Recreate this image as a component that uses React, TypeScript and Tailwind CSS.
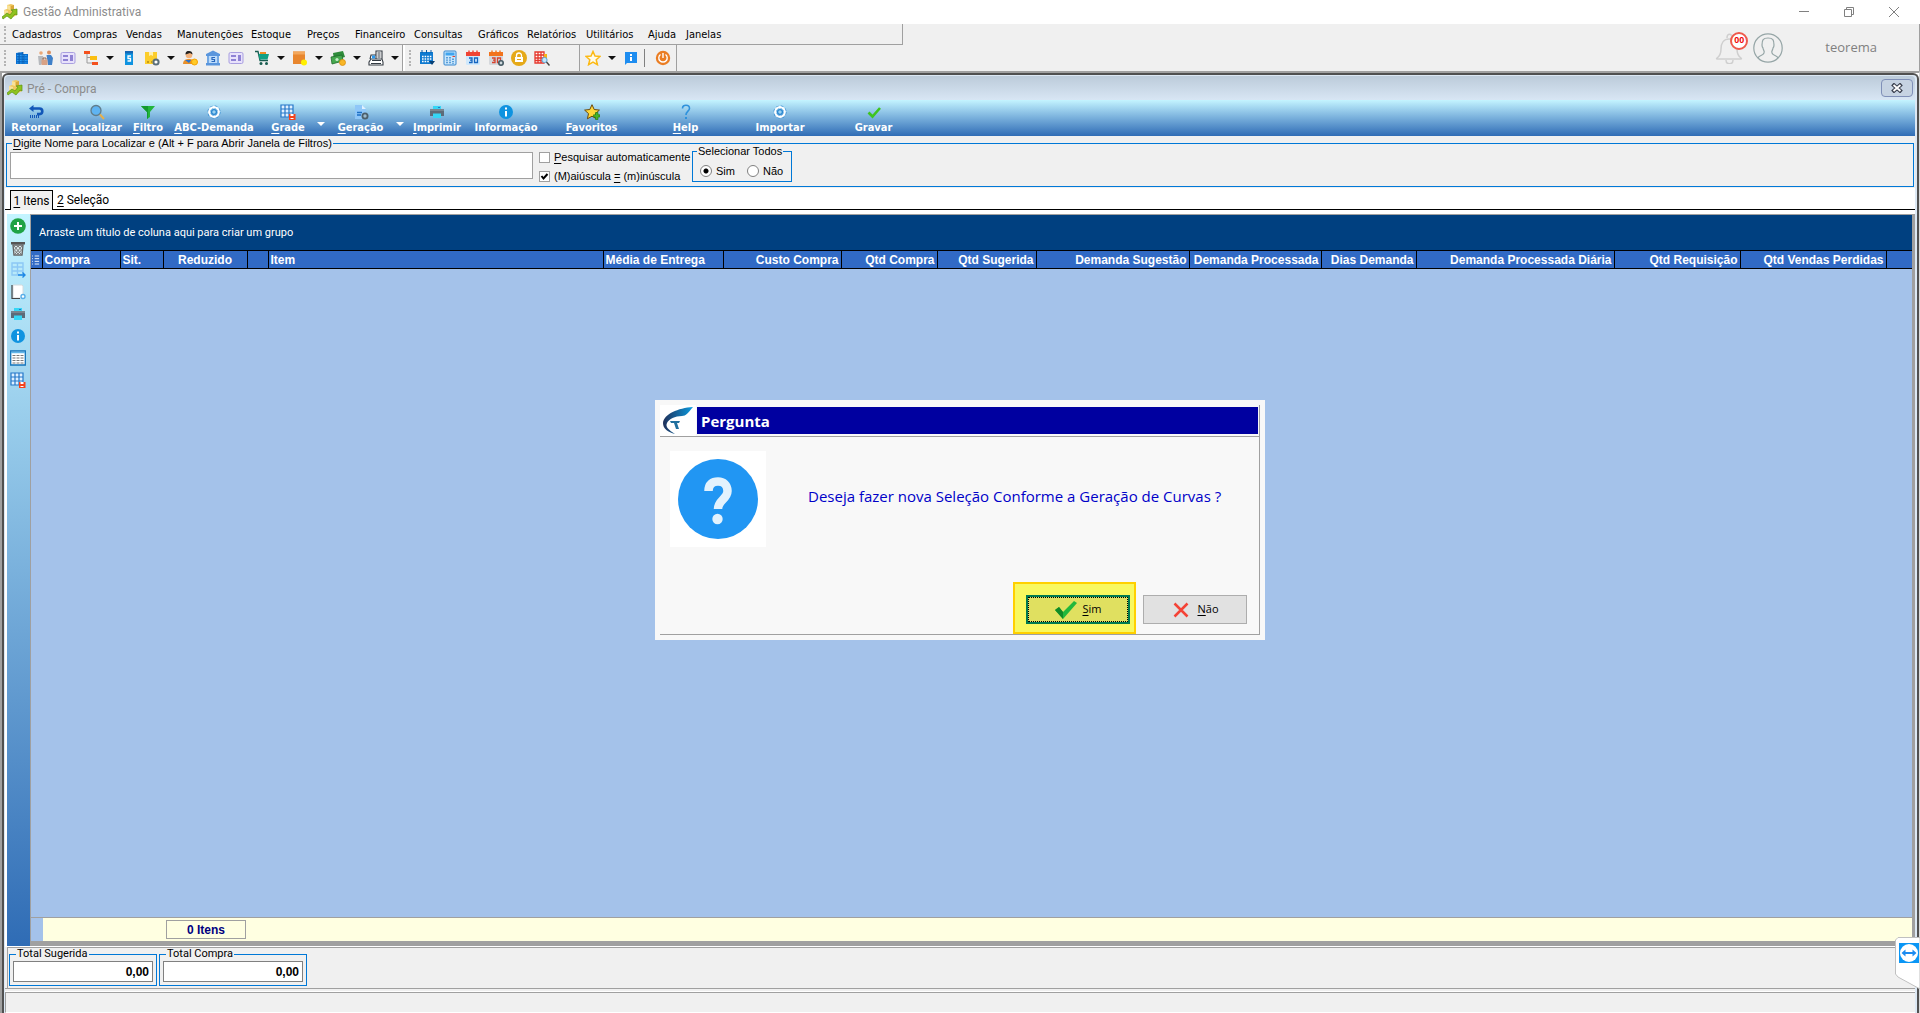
import type { ReactNode } from 'react';

interface IconProps {
  size?: string;
  children: ReactNode;
}

function Icon({ size = 'h-4 w-4', children }: IconProps) {
  return (
    <svg viewBox="0 0 16 16" className={`${size} shrink-0`} fill="none" aria-hidden="true">
      {children}
    </svg>
  );
}

const appIcon = (
  <Icon>
    <path d="M5 1l4-1 3 1v4l3 1v5l-4 2-9-3V6l3-1z" fill="#f0c860" />
    <path d="M5 1l3 1v4l-3-1zM2 6l4 1v4l-4-1z" fill="#f8e29a" />
    <path d="M9 2l3-1v4l-3 1zM11 7l4-1v4l-4 2z" fill="#d9a63a" />
    <path d="M0 13l5-4 3 2 3-4-2-1 6-1v6l-2-1-4 5-4-3-4 3z" fill="#8fc31f" stroke="#5a9410" strokeWidth=".7" />
  </Icon>
);

const gridSave = (
  <Icon>
    <path d="M1 1h12v12H1zM1 5h12M1 9h12M5 1v12M9 1v12" stroke="#2477c9" strokeWidth="1.200" fill="#dff0ff" />
    <path d="M9 10h6.500v6H9z" fill="#f4431c" />
    <path d="M10.500 10h3v2h-3zM10.500 14h3v1h-3z" fill="#fff" />
  </Icon>
);

const printer = (
  <Icon>
    <path d="M4 2h8v4H4z" fill="#35d6f5" />
    <path d="M1 5h14v7H1z" fill="#5d6b78" />
    <path d="M1 5h14v2H1z" fill="#78858f" />
    <path d="M5 2h6v2H5zM4 9.500h8V14H4z" fill="#35d6f5" />
    <path d="M9 3h2v1H9z" fill="#2477c9" />
  </Icon>
);

const info = (
  <Icon>
    <circle cx="8" cy="8" r="7" fill="#0f93e0" />
    <path d="M7 3.500h2v2H7zM7 7h2v5.500H7z" fill="#fff" />
  </Icon>
);

const gear = (
  <Icon>
    <circle cx="8" cy="8" r="5" stroke="#2a86d0" strokeWidth="3" strokeDasharray="2.200 1.730" />
    <circle cx="8" cy="8" r="4.800" stroke="#fff" strokeWidth="2.200" />
    <circle cx="8" cy="8" r="2.400" stroke="#2a86d0" strokeWidth="1.300" fill="#9bd2f2" />
  </Icon>
);

const card = (
  <Icon>
    <rect x="1" y="2.500" width="14" height="11" rx="1.500" fill="#e8e2fb" stroke="#a99fe0" />
    <path d="M3 6h5M3 10h5M10 6h3M10 8h3M10 10h3" stroke="#7263c8" strokeWidth="1.300" />
  </Icon>
);

const calendar = (top: string, body: string, ink: string, geared?: boolean) => (
  <Icon>
    <rect x="1" y="2" width="14" height="13" rx="1.500" fill={body} />
    <path d="M1 2h14v4H1z" fill={top} />
    <path d="M4 .5v3M8 .5v3M12 .5v3" stroke={top} strokeWidth="1.400" />
    <path d="M4 8h3v4.500H4M5 10.200h2M9.500 8h3v4.500h-3z" stroke={ink} strokeWidth="1.300" />
    {geared && <circle cx="13" cy="13" r="2.200" stroke="#455a64" strokeWidth="1.600" fill="#cfd8dc" />}
  </Icon>
);

const quickGroup = [
  {
    name: 'Empresas',
    icon: (
      <Icon>
        <path d="M2 3l7-1v2h5v10H2z" fill="#0b6fd0" />
        <path d="M3 5.500h10M3 8h11M3 10.500h11M3 13h11" stroke="#2b9af0" strokeDasharray="2 .6" />
        <path d="M5 2.500V14M9 2v12" stroke="#085099" strokeWidth=".7" />
      </Icon>
    ),
  },
  {
    name: 'Fornecedores',
    icon: (
      <Icon>
        <circle cx="4" cy="3" r="1.800" fill="#e9a878" />
        <circle cx="12" cy="2.500" r="2" fill="#d98f60" />
        <path d="M1 6h5l1 4-3 5H2z" fill="#b6b9bd" />
        <path d="M9.500 5H14l2 3-1 7h-4z" fill="#3f80c8" />
        <path d="M4.500 9.500h6V15h-6z" fill="#d8a184" />
        <path d="M6 9.500V8h3v1.500" stroke="#96644b" />
      </Icon>
    ),
  },
  { name: 'Cartões', icon: card },
  {
    name: 'Estrutura',
    arrow: true,
    icon: (
      <Icon>
        <path d="M4 3v10h5M4 7.500h4" stroke="#9a9a9a" />
        <path d="M1 1h6v3H1zM9 12h6v3H9z" fill="#f4511e" />
        <path d="M7 6h7v4H7z" fill="#fbbf12" />
      </Icon>
    ),
  },
  {
    name: 'Tabela de preços',
    icon: (
      <Icon>
        <path d="M4 1h8v14H4z" fill="#0f93e0" />
        <path d="M4 1h8v2.500H4z" fill="#1467b5" />
        <path d="M10 6H7v2.500h2.500V11H6.500" stroke="#fff" strokeWidth="1.300" />
      </Icon>
    ),
  },
  {
    name: 'Produtos',
    arrow: true,
    icon: (
      <Icon>
        <path d="M1 2h12v12H1z" fill="#fccd2b" />
        <path d="M5 2h4v4l-2-1-2 1z" fill="#fff0b0" />
        <path d="M3 12h2M7 12h1" stroke="#8a6b10" />
        <circle cx="12" cy="12" r="2.600" stroke="#5b6f7b" strokeWidth="2" fill="#fff" />
      </Icon>
    ),
  },
  {
    name: 'Clientes',
    icon: (
      <Icon>
        <circle cx="7" cy="5" r="3.300" fill="#f2b27c" />
        <path d="M3.500 4.500C3.500 1.500 5 1 7 1s3.500 1 3.500 3.500L8 3z" fill="#222" />
        <path d="M1 14c0-4 3-5 6-5s5 1 6 5z" fill="#e8902a" />
        <path d="M3 10h6l-2 3z" fill="#2874d0" />
        <circle cx="12.500" cy="12" r="3" fill="#ffca28" stroke="#f5a400" />
      </Icon>
    ),
  },
  {
    name: 'Bancos',
    icon: (
      <Icon>
        <path d="M1 4l7-3.500L15 4v2H1zM1 13h14v2.500H1z" fill="#5a96dd" />
        <path d="M2 6h12v7H2z" fill="#bddcfb" />
        <path d="M3 6v7M13 6v7" stroke="#5a96dd" strokeWidth="1.500" />
        <path d="M10 7.500H7v2h2.500v2H6.500" stroke="#2867bd" strokeWidth="1.200" />
      </Icon>
    ),
  },
  { name: 'Cheques', icon: card },
];

const salesGroup = [
  {
    name: 'Vendas',
    icon: (
      <Icon>
        <path d="M1 1.500h3l2 9h8" stroke="#185c50" strokeWidth="1.300" />
        <path d="M4.500 4H15l-1.500 5.500h-8z" fill="#12a185" />
        <path d="M6 2h6v2H6z" fill="#f08a24" />
        <circle cx="7" cy="13.500" r="1.500" fill="#185c50" />
        <circle cx="12.500" cy="13.500" r="1.500" fill="#185c50" />
      </Icon>
    ),
  },
  {
    name: 'Estoque',
    icon: (
      <Icon>
        <path d="M1 1.500h12v12.500H1z" fill="#e8862e" />
        <path d="M1 1.500h12v3H1z" fill="#f3a75c" />
        <circle cx="12" cy="12.500" r="3" fill="#fff000" />
      </Icon>
    ),
  },
  {
    name: 'Pagamentos',
    icon: (
      <Icon>
        <path d="M3 3l10-2 2 6-11 3z" fill="#2f8b3b" />
        <path d="M1 7l11-2 1 6-11 3z" fill="#45a84f" stroke="#1f6b2b" strokeWidth=".8" />
        <circle cx="7" cy="9.500" r="1.600" fill="#c6eec9" />
        <circle cx="12.500" cy="12.500" r="3" fill="#f8b626" stroke="#dc8f10" strokeWidth=".8" />
      </Icon>
    ),
  },
  {
    name: 'Caixa',
    icon: (
      <Icon>
        <path d="M2 9l1-4h5v4M8 9V1h6v8M1 12l2-3h11l1 3v3H1z" stroke="#333a42" strokeWidth="1.100" fill="#fff" />
        <path d="M4 5.500h3v3H4z" fill="#2b9af0" />
        <path d="M9.500 3h3M9.500 5h3M9.500 7h3M4 10.500h9M3 13.500h10" stroke="#333a42" />
      </Icon>
    ),
  },
];

const agendaGroup = [
  {
    name: 'Agenda',
    icon: (
      <Icon>
        <path d="M1 2h13v12H1z" fill="#0f7ad0" />
        <path d="M3 0v3M7.500 0v3M12 0v3" stroke="#0b5ba3" />
        <path d="M3 6.500h10M3 9h10M3 11.500h7" stroke="#fff" strokeWidth="1.300" strokeDasharray="1.600 1" />
        <path d="M10 11h6l-3 4z" fill="#073f73" />
      </Icon>
    ),
  },
  {
    name: 'Calculadora',
    icon: (
      <Icon>
        <rect x="2" y="1" width="12" height="14" rx="1" fill="#c9e6fb" stroke="#3486cf" />
        <path d="M3.500 2.500h9v3h-9z" fill="#3fa4ee" />
        <path d="M5 7v7M8 7v7M11 8.500V14" stroke="#3486cf" strokeWidth="1.500" strokeDasharray="1.400 1" />
        <path d="M10.500 6.500H13" stroke="#e4432d" />
      </Icon>
    ),
  },
  { name: 'Calendário', icon: calendar('#ef4434', '#cfe8fc', '#1565c0') },
  { name: 'Configurar calendário', icon: calendar('#f2731d', '#d5d8dc', '#d8422c', true) },
  {
    name: 'Bloquear',
    icon: (
      <Icon>
        <circle cx="8" cy="8" r="8" fill="#e5a918" />
        <path d="M4 7h8v5H4z" fill="#fff" />
        <path d="M5.500 7V5.500a2.500 2.500 0 015 0V7" stroke="#fff" strokeWidth="1.300" />
        <path d="M6 9.500h4" stroke="#e5a918" />
      </Icon>
    ),
  },
  {
    name: 'Pesquisar tabela',
    icon: (
      <Icon>
        <path d="M1 2h9v11H1zM1 5h9M1 8h9M1 10.500h9M4 2v11M7 2v11" stroke="#e5372c" strokeWidth="1.300" fill="#fff" />
        <path d="M10 4h3v4h-3z" fill="#f7b21a" />
        <circle cx="10.500" cy="10" r="2.600" fill="#c5e7fb" stroke="#5ba4d4" />
        <path d="M12.500 12l3 3.500" stroke="#444" strokeWidth="1.400" />
      </Icon>
    ),
  },
];

const menuItems = [
  { label: 'Cadastros', width: 'w-[61px]' },
  { label: 'Compras', width: 'w-[53px]' },
  { label: 'Vendas', width: 'w-[51px]' },
  { label: 'Manutenções', width: 'w-[74px]' },
  { label: 'Estoque', width: 'w-14' },
  { label: 'Preços', width: 'w-12' },
  { label: 'Financeiro', width: 'w-[59px]' },
  { label: 'Consultas', width: 'w-16' },
  { label: 'Gráficos', width: 'w-[49px]' },
  { label: 'Relatórios', width: 'w-[59px]' },
  { label: 'Utilitários', width: 'w-[62px]' },
  { label: 'Ajuda', width: 'w-[38px]' },
  { label: 'Janelas', width: 'w-[46px]' },
];

const actions = [
  {
    label: 'Retornar',
    width: 'w-[60px]',
    icon: (
      <Icon>
        <path d="M3 4.500h8.500a2.800 2.800 0 010 5.600H9" stroke="#1257b8" strokeWidth="2.600" />
        <path d="M1 4.500L5.500 1v7z" fill="#1257b8" />
        <path d="M2 12.500h9" stroke="#1257b8" strokeWidth="3" strokeDasharray="1 1" />
      </Icon>
    ),
  },
  {
    label: 'Localizar',
    hot: true,
    width: 'w-[62px]',
    icon: (
      <Icon>
        <circle cx="7" cy="6.500" r="5" fill="#5fb4f2" stroke="#607d8b" strokeWidth="1.300" />
        <path d="M11 10.500l4 4.500" stroke="#e8b04a" strokeWidth="2" />
      </Icon>
    ),
  },
  {
    label: 'Filtro',
    hot: true,
    width: 'w-10',
    icon: (
      <Icon>
        <path d="M1 2h14l-5 6v5l-3 2V8z" fill="#22b53c" />
        <path d="M1 2h7v12l-1 1V8z" fill="#129a30" />
      </Icon>
    ),
  },
  { label: 'ABC-Demanda', hot: true, width: 'w-[92px]', icon: gear },
  { label: 'Grade', hot: true, width: 'w-14', arrow: true, icon: gridSave },
  {
    label: 'Geração',
    hot: true,
    width: 'w-[69px]',
    arrow: true,
    icon: (
      <Icon>
        <path d="M2 1h7l4 4v10H2z" fill="#8fc7f8" />
        <path d="M9 1l4 4H9z" fill="#e0f1ff" />
        <path d="M4 8.500h5M4 11h4" stroke="#1c6fc4" strokeWidth="1.300" />
        <circle cx="12" cy="12" r="2.600" stroke="#4c5f6b" strokeWidth="1.800" fill="#9bb9cc" />
      </Icon>
    ),
  },
  { label: 'Imprimir', hot: true, width: 'w-16', icon: printer },
  { label: 'Informação', width: 'w-[74px]', icon: info },
  {
    label: 'Favoritos',
    hot: true,
    width: 'w-[97px]',
    icon: (
      <Icon>
        <path d="M8 .7l2.200 4.800 5.200.6-3.900 3.500 1.100 5.200L8 12.200l-4.600 2.600 1.100-5.200L.6 6.100l5.200-.6z" fill="#ffd83a" stroke="#6b4a0a" />
        <path d="M11.500 8.500h2.500v2.300h2V13h-2v2.500h-2.500V13h-2v-2.200h2z" fill="#45b52a" stroke="#23740f" strokeWidth=".6" />
      </Icon>
    ),
  },
  {
    label: 'Help',
    hot: true,
    width: 'w-[91px]',
    icon: (
      <Icon>
        <path d="M4.500 4.500C4.500 2 6 1.200 8 1.200s3.500 1 3.500 3.200C11.500 7 8 7.500 8 11" stroke="#2f92dc" strokeWidth="1.600" />
        <path d="M7 13h2v2H7z" fill="#2f92dc" />
      </Icon>
    ),
  },
  { label: 'Importar', width: 'w-[98px]', icon: gear },
  {
    label: 'Gravar',
    width: 'w-[89px]',
    icon: (
      <Icon>
        <path d="M2.500 8.500l4 4L14 4" stroke="#3ec41e" strokeWidth="2.600" />
      </Icon>
    ),
  },
];

const sideTools = [
  {
    name: 'Incluir',
    icon: (
      <Icon>
        <circle cx="8" cy="8" r="7.800" fill="#1fa345" />
        <path d="M8 4v8M4 8h8" stroke="#fff" strokeWidth="2" />
      </Icon>
    ),
  },
  {
    name: 'Excluir',
    icon: (
      <Icon>
        <path d="M1 2h14v2.500H1z" fill="#555" />
        <path d="M3 5h10l-1 10H4z" fill="#dcebee" stroke="#666" strokeWidth="1.400" />
        <path d="M4 6l7 8M12 6l-7 8M8 6l3.500 4L8 14l-3.500-4z" stroke="#777" />
      </Icon>
    ),
  },
  {
    name: 'Exportar',
    icon: (
      <Icon>
        <path d="M2 1h11v12H2zM2 5h11M2 9h11M7.500 1v12" stroke="#8cc8f5" strokeWidth="1.400" />
        <path d="M8 13h7M12.500 10.500L15 13l-2.500 2.500" stroke="#1e88e5" strokeWidth="1.400" />
      </Icon>
    ),
  },
  {
    name: 'Relatório',
    icon: (
      <Icon>
        <path d="M3 1h9l1 1v12H3z" fill="#fff" stroke="#d2dadd" />
        <path d="M2 1v13.500h8" stroke="#444" strokeWidth="1.200" />
        <circle cx="13" cy="12.500" r="2" fill="#fff" stroke="#58aee8" strokeWidth="1.400" />
      </Icon>
    ),
  },
  { name: 'Imprimir lista', icon: printer },
  { name: 'Detalhes', icon: info },
  {
    name: 'Planilha',
    icon: (
      <Icon>
        <path d="M.7 1h14.600v14H.7z" fill="#fff" stroke="#1173ba" strokeWidth="1.300" />
        <path d="M1 2.500h14" stroke="#62b5e8" strokeWidth="1.500" />
        <path d="M2.500 5.500h11M2.500 8h11M2.500 10.500h11M2.500 13h11" stroke="#777" strokeDasharray="3 1" />
      </Icon>
    ),
  },
  { name: 'Salvar grade', icon: gridSave },
];

const columns = [
  { label: 'Compra', width: 'w-[78px]', align: 'text-left' },
  { label: 'Sit.', width: 'w-[43px]', align: 'text-left' },
  { label: 'Reduzido', width: 'w-[84px]', align: 'text-center' },
  { label: '', width: 'w-[21px]', align: 'text-left' },
  { label: 'Item', width: 'w-[335px]', align: 'text-left' },
  { label: 'Média de Entrega', width: 'w-[120px]', align: 'text-left' },
  { label: 'Custo Compra', width: 'w-[118px]', align: 'text-right' },
  { label: 'Qtd Compra', width: 'w-24', align: 'text-right' },
  { label: 'Qtd Sugerida', width: 'w-[99px]', align: 'text-right' },
  { label: 'Demanda Sugestão', width: 'w-[153px]', align: 'text-right' },
  { label: 'Demanda Processada', width: 'w-[132px]', align: 'text-right' },
  { label: 'Dias Demanda', width: 'w-[95px]', align: 'text-right' },
  { label: 'Demanda Processada Diária', width: 'w-[198px]', align: 'text-right' },
  { label: 'Qtd Requisição', width: 'w-[126px]', align: 'text-right' },
  { label: 'Qtd Vendas Perdidas', width: 'w-[146px]', align: 'text-right' },
];

function HotLabel({ text }: { text: string }) {
  return (
    <>
      <span className="underline underline-offset-2">{text[0]}</span>
      {text.slice(1)}
    </>
  );
}

function Caret() {
  return (
    <svg viewBox="0 0 8 4" className="h-1 w-2" aria-hidden="true">
      <path d="M0 0h8L4 4z" fill="currentColor" />
    </svg>
  );
}

function Grip() {
  return <span className="mx-1 h-4 w-0 border-l-2 border-dotted border-[#b4b4b4]" />;
}

function ToolButton({ name, icon, arrow }: { name: string; icon: ReactNode; arrow?: boolean }) {
  return (
    <button type="button" aria-label={name} className="flex h-6 items-center">
      <span className="flex w-[23px] justify-center">{icon}</span>
      {arrow && (
        <span className="flex w-[15px] justify-center text-[#111]">
          <Caret />
        </span>
      )}
    </button>
  );
}

function TitleBar() {
  return (
    <header className="flex h-6 items-center bg-white pl-0.5 pr-4">
      {appIcon}
      <h1 className="ml-[5px] font-['Roboto','Noto_Sans',sans-serif] text-[12px] text-[#8c8c8c]">Gestão Administrativa</h1>
      <div className="ml-auto flex gap-[25px] text-[#808080]">
        <button type="button" aria-label="Minimizar" className="flex h-5 w-5 items-center justify-center">
          <svg viewBox="0 0 10 10" className="h-2.5 w-2.5"><path d="M0 4.500h10" stroke="currentColor" /></svg>
        </button>
        <button type="button" aria-label="Restaurar" className="flex h-5 w-5 items-center justify-center">
          <svg viewBox="0 0 10 10" className="h-2.5 w-2.5" fill="none"><path d="M.5 2.500h7v7h-7zM2.500 2.500v-2h7v7h-2" stroke="currentColor" /></svg>
        </button>
        <button type="button" aria-label="Fechar" className="flex h-5 w-5 items-center justify-center">
          <svg viewBox="0 0 10 10" className="h-2.5 w-2.5"><path d="M0 0l10 10M10 0L0 10" stroke="currentColor" /></svg>
        </button>
      </div>
    </header>
  );
}

function MainBars() {
  return (
    <div className="flex h-[47px] bg-[#f0f0f0]">
      <div>
        <nav className="flex h-[21px] w-[903px] items-center border-b border-r border-[#a0a0a0] text-[11px]">
          <Grip />
          <div className="flex pl-0.5 pt-0.5">
            {menuItems.map((m) => (
              <button key={m.label} type="button" className={`${m.width} text-left leading-4`}>
                {m.label}
              </button>
            ))}
          </div>
        </nav>
        <div className="flex h-[26px] items-center">
          <div className="flex h-full w-[403px] items-center border-r border-[#a0a0a0]">
            <Grip />
            {quickGroup.map((t) => (
              <ToolButton key={t.name} {...t} />
            ))}
            <span className="w-[3px]" />
            {salesGroup.map((t) => (
              <ToolButton key={t.name} {...t} arrow />
            ))}
          </div>
          <div className="flex h-full w-[177px] items-center border-l-2 border-r border-l-white border-r-[#a0a0a0]">
            <Grip />
            {agendaGroup.map((t) => (
              <ToolButton key={t.name} {...t} />
            ))}
          </div>
          <div className="flex h-full w-[97px] items-center border-r border-[#a0a0a0] pl-px">
            <ToolButton
              name="Favoritos"
              arrow
              icon={
                <Icon>
                  <path d="M8 1.500l2 4.500 5 .5-3.800 3.300 1.200 4.900L8 12.100l-4.400 2.600 1.200-4.900L1 6.500 6 6z" stroke="#fcb913" strokeWidth="1.500" fill="#fffbea" />
                </Icon>
              }
            />
            <ToolButton
              name="Mensagem"
              icon={
                <Icon>
                  <path d="M2 2h12v11H4l-2 2z" fill="#1e8df0" />
                  <path d="M7 4h2v2H7zM7 7h2v4H7z" fill="#fff" />
                </Icon>
              }
            />
            <span className="ml-0.5 mr-1.5 h-[18px] w-px bg-[#808080]" />
            <ToolButton
              name="Sair"
              icon={
                <Icon>
                  <circle cx="8" cy="8" r="7.200" fill="#ea7d23" />
                  <path d="M5.500 4.500a4.200 4.200 0 105 0M8 3v5" stroke="#fff" strokeWidth="1.400" />
                </Icon>
              }
            />
          </div>
        </div>
      </div>
      <div className="ml-auto flex items-center border-r border-[#a0a0a0] pr-[42px] pt-px">
        <button type="button" aria-label="Notificações" className="relative h-8 w-8">
          <svg viewBox="0 0 32 32" className="h-8 w-8" fill="none" stroke="#cfcfcf" strokeWidth="1.500">
            <path d="M3 26c3-2 4-4 4-9 0-6 3-10 8-10s8 4 8 10c0 5 1 7 4 9 1 1 0 1-1 1H4c-1 0-2 0-1-1zM12 28c0 5 7 5 7 0M13 6c0-5 5-5 5 0" />
          </svg>
          <span className="absolute -right-0.5 top-0 flex h-[18px] w-[18px] items-center justify-center rounded-full border-2 border-[#ee5a4c] bg-white font-['Liberation_Sans',sans-serif] text-[9px] font-bold text-[#f00000]">
            00
          </span>
        </button>
        <svg viewBox="0 0 30 30" className="ml-[7px] h-[30px] w-[30px]" fill="none" stroke="#95a5a6" strokeWidth="1.200">
          <circle cx="15" cy="15" r="14.200" />
          <path d="M5 25c1-3 5-2 6-5 1-2-1-3-1-5-1-1-1-2-1-3 0-5 1-7 6-7s6 2 6 7c0 1 0 2-1 3 0 2-2 3-1 5 1 3 5 2 6 5" />
        </svg>
        <span className="ml-[42px] font-['Open_Sans','Noto_Sans',sans-serif] text-[13px] text-[#808080]">teorema</span>
      </div>
    </div>
  );
}

function SearchPanel() {
  return (
    <section className="bg-[#f0f0f0] pb-px font-['Liberation_Sans',sans-serif] text-[11px] leading-[14px]">
      <fieldset className="mx-px h-[51px] border border-[#0078d7] pl-[3px]">
        <legend className="ml-[2px] px-px">
          <label htmlFor="localizar">
            <HotLabel text="Digite Nome para Localizar e (Alt + F para Abrir Janela de Filtros)" />
          </label>
        </legend>
        <div className="-mt-1.5 flex">
          <input id="localizar" type="text" className="mt-2 h-[27px] w-[523px] border border-[#a0a0a0] bg-white px-1" />
          <div className="ml-1.5 mt-1.5 flex w-[153px] flex-col gap-[5px]">
            <label className="flex items-center gap-1">
              <input type="checkbox" className="h-[11px] w-[11px] appearance-none border border-[#a0a0a0] bg-white" />
              <span className="whitespace-nowrap"><HotLabel text="Pesquisar automaticamente" /></span>
            </label>
            <label className="relative flex items-center gap-1">
              <input type="checkbox" defaultChecked className="peer h-[11px] w-[11px] appearance-none border border-[#a0a0a0] bg-white" />
              <svg viewBox="0 0 11 11" className="pointer-events-none absolute left-0 hidden h-[11px] w-[11px] peer-checked:block">
                <path d="M2.500 5l2 2.500L8.500 3" stroke="#000" strokeWidth="2" fill="none" />
              </svg>
              <span className="whitespace-nowrap">
                (M)aiúscula <span className="underline underline-offset-2">=</span> (m)inúscula
              </span>
            </label>
          </div>
          <fieldset className="h-[38px] w-[100px] border border-[#0078d7]">
            <legend className="ml-1 whitespace-nowrap px-px">Selecionar Todos</legend>
            <div className="flex gap-3 pl-[7px] pt-[6px]">
              {['Sim', 'Não'].map((v) => (
                <label key={v} className="flex items-center gap-1">
                  <input
                    type="radio"
                    name="todos"
                    defaultChecked={v === 'Sim'}
                    className="h-3 w-3 appearance-none rounded-full border border-[#808080] bg-white checked:bg-[radial-gradient(circle,#000_2px,#fff_3px)]"
                  />
                  {v}
                </label>
              ))}
            </div>
          </fieldset>
        </div>
      </fieldset>
    </section>
  );
}

function DataGrid() {
  return (
    <div className="flex flex-1 bg-white pl-0.5 pt-1">
      <aside className="flex w-[23px] flex-col gap-1.5 bg-gradient-to-b from-[#c4f4ff] to-[#2f6cb5] pl-[3px] pt-1">
        {sideTools.map((t) => (
          <button key={t.name} type="button" aria-label={t.name} className="h-4 w-4">
            {t.icon}
          </button>
        ))}
      </aside>
      <div className="flex min-w-0 flex-1 flex-col border-b-[5px] border-l border-r-[3px] border-t border-[#a0a0a0] bg-[#a4c2ea] font-['Liberation_Sans',sans-serif]">
        <div className="flex h-[35px] items-center bg-[#004080] pl-2 pt-0.5 font-['Roboto',sans-serif] text-[11px] text-white">
          Arraste um título de coluna aqui para criar um grupo
        </div>
        <table className="w-full table-fixed border-y border-black bg-[#316ac5] text-[12px] text-white">
          <thead>
            <tr className="h-[18px]">
              <th aria-label="Marcador" className="w-[11px] border-r border-black p-0">
                <svg viewBox="0 0 9 10" className="mx-auto h-2.5 w-2">
                  <path d="M0 .5h1M0 3.500h1M0 6.500h1M0 9.500h1M3 .5h5M3 3.500h5M3 6.500h5M3 9.500h5" stroke="#fff" />
                </svg>
              </th>
              {columns.map((c, i) => (
                <th key={i} className={`${c.width} ${c.align} overflow-hidden whitespace-nowrap border-r border-black px-0.5 py-0 leading-4`}>
                  {c.label}
                </th>
              ))}
              <th aria-label="Restante" className="p-0" />
            </tr>
          </thead>
        </table>
        <div className="flex-1" />
        <div className="flex h-6 border-t border-[#a0a0a0] pl-px">
          <div className="w-[11px]" />
          <div className="flex flex-1 items-center bg-[#ffffe1]">
            <output className="ml-[123px] flex h-[19px] w-20 items-center justify-center border border-[#a0a0a0] text-[12px] font-bold text-[#000080]">
              0 Itens
            </output>
          </div>
        </div>
      </div>
    </div>
  );
}

function Totals() {
  return (
    <footer className="bg-[#f0f0f0] font-['Liberation_Sans',sans-serif]">
      <div className="border-t border-white">
        <div className="ml-0.5 flex h-[41px] gap-0.5 border-l border-t border-[#a0a0a0] pl-px">
          {['Total Sugerida', 'Total Compra'].map((t) => (
            <fieldset key={t} className="h-[38px] w-[148px] border border-[#0078d7] px-[3px]">
              <legend className="ml-[3px] px-px font-['Roboto',sans-serif] text-[11px] leading-3">
                <label htmlFor={t}>{t}</label>
              </legend>
              <input
                id={t}
                defaultValue="0,00"
                className="mt-px block h-[21px] w-full border border-[#808080] bg-white pr-[3px] text-right text-[12px] font-bold"
              />
            </fieldset>
          ))}
        </div>
      </div>
      <div className="h-1 border-y border-b-white border-t-[#a0a0a0] bg-[#f0f0f0]" />
      <div className="h-[21px] border-b border-l border-t border-[#a0a0a0] border-b-white" />
    </footer>
  );
}

function QuestionDialog() {
  return (
    <div className="absolute inset-x-0 top-[400px] flex justify-center">
      <div role="dialog" aria-labelledby="pergunta" className="w-[610px] bg-[#f8f8f8] p-[5px] font-['Open_Sans','Noto_Sans',sans-serif]">
        <div className="border-b border-r border-[#a0a0a0]">
          <div className="flex h-8 border-b border-[#a0a0a0]">
            <div className="flex w-9 items-center justify-center bg-white">
              <svg viewBox="0 0 32 28" className="h-7 w-8">
                <defs>
                  <linearGradient id="swoosh">
                    <stop offset="0" stopColor="#20305a" />
                    <stop offset="1" stopColor="#0a9be0" />
                  </linearGradient>
                </defs>
                <path d="M31 0C16 1 2 7 1 16c0 6 5 9 12 11C7 23 3 20 5 16c2-4 8-7 15-7 4 0 6-3 11-9z" fill="url(#swoosh)" />
                <path d="M8 14h10l-1 2h-2l2 6h-3l-2-6H9z" fill="#1f6f9e" />
              </svg>
            </div>
            <h2 id="pergunta" className="my-0.5 ml-px mr-px flex flex-1 items-center bg-[#0000a0] pl-1 pt-0.5 text-[15px] font-bold text-white">
              Pergunta
            </h2>
          </div>
          <div className="flex pl-2.5 pt-3.5">
            <div className="flex h-24 w-24 items-center justify-center bg-white">
              <svg viewBox="0 0 80 80" className="h-20 w-20">
                <circle cx="40" cy="40" r="40" fill="#2196f3" />
                <path d="M30.500 32c0-7 4-9.500 9.500-9.500S49.500 26 49.500 32c0 8-9.500 9-9.500 18" stroke="#e3f2fd" strokeWidth="8.500" fill="none" />
                <circle cx="39.500" cy="60" r="5.200" fill="#e3f2fd" />
              </svg>
            </div>
            <p className="ml-[42px] mt-[35px] text-[15px] leading-5 text-[#0000c8]">
              Deseja fazer nova Seleção Conforme a Geração de Curvas ?
            </p>
          </div>
          <div className="mt-[35px] flex items-start justify-end pr-3 text-[11px]">
            <div className="mr-[7px] border-2 border-[#ffd000] bg-[#f8f860] pb-2 pl-[11px] pr-1 pt-[11px]">
              <button type="button" className="h-[29px] w-[104px] border-2 border-[#007a50] bg-[#e0e060]">
                <span className="flex h-full items-center justify-center gap-1 border border-dotted border-black">
                  <svg viewBox="0 0 24 20" className="h-5 w-6">
                    <path d="M1 10l4-3 4 5L20 1l3 2L9 19z" fill="#22b83c" />
                    <path d="M1 10l4-3 4 5v7z" fill="#128a26" />
                  </svg>
                  <span><HotLabel text="Sim" /></span>
                </span>
              </button>
            </div>
            <button type="button" className="mt-[13px] flex h-[29px] w-[104px] items-center justify-center gap-2 border border-[#adadad] bg-[#e1e1e1] pl-0.5">
              <svg viewBox="0 0 16 16" className="h-4 w-4">
                <path d="M1.500 1.500l13 13M14.500 1.500l-13 13" stroke="#f44336" strokeWidth="2.500" />
              </svg>
              <span><HotLabel text="Não" /></span>
            </button>
          </div>
        </div>
      </div>
    </div>
  );
}

function RemoteTab() {
  return (
    <button type="button" aria-label="Acesso remoto" className="absolute right-0 top-[937px]">
      <svg viewBox="0 0 25 52" className="h-[52px] w-[25px]">
        <path d="M25 .5H3L.5 3v34L3 40l22 12z" fill="#fff" stroke="#c0c0c0" />
        <path d="M4 6h20v20H4z" fill="#0a96f5" />
        <circle cx="14" cy="16" r="9" fill="#fff" />
        <path d="M6.500 16l4-3.500v2.500h7v-2.500l4 3.500-4 3.500V17h-7v2.500z" fill="#1b8bf0" />
      </svg>
    </button>
  );
}

export default function App() {
  return (
    <div className="relative flex min-h-screen flex-col bg-white font-['DejaVu_Sans_Condensed','Liberation_Sans',sans-serif] text-black">
      <TitleBar />
      <MainBars />
      <main className="flex flex-1 flex-col border-l-2 border-r border-t-2 border-l-[#a0a0a0] border-r-[#d8d8d8] border-t-[#a0a0a0]">
        <div className="flex flex-1 flex-col rounded-t-md border-x-2 border-t-2 border-[#505050] bg-[#dce8f4] pl-px pr-0.5 pt-px">
          <div className="flex h-6 items-center rounded-t bg-gradient-to-b from-[#bccbda] to-[#d8e6f4] pl-0.5 pr-[2px]">
            {appIcon}
            <h2 className="ml-1 pt-0.5 font-['Roboto','Noto_Sans',sans-serif] text-[12px] text-[#8c8c8c]">Pré - Compra</h2>
            <button type="button" aria-label="Fechar janela" className="ml-auto flex h-[18px] w-8 items-center justify-center rounded-sm border border-[#8090b8] bg-[#c6d3e2]">
              <svg viewBox="0 0 12 10" className="h-2.5 w-3">
                <path d="M1.500 1l9 8M10.500 1l-9 8" stroke="#3c4250" strokeWidth="4" />
                <path d="M2.500 2l7 6M9.500 2l-7 6" stroke="#fff" strokeWidth="1.800" />
              </svg>
            </button>
          </div>
          <div className="flex h-9 items-stretch bg-gradient-to-b from-[#c4f4ff] to-[#2f6cb5] pl-px text-[11px] font-bold text-white">
            {actions.map((a) => (
              <div key={a.label} className="flex">
                <button type="button" className={`${a.width} flex flex-col items-center gap-px pt-1`}>
                  {a.icon}
                  <span className="whitespace-nowrap leading-[14px]">{a.hot ? <HotLabel text={a.label} /> : a.label}</span>
                </button>
                {a.arrow && (
                  <button type="button" aria-label={`Opções de ${a.label}`} className="flex w-2.5 items-center justify-center pt-3">
                    <Caret />
                  </button>
                )}
              </div>
            ))}
          </div>
          <SearchPanel />
          <div role="tablist" className="flex h-[22px] items-end bg-white pt-0.5 font-['Roboto',sans-serif] text-[12px]">
            <span className="w-[5px] self-stretch border-b border-black" />
            <button role="tab" aria-selected="true" type="button" className="h-full w-[43px] border-x border-t border-black bg-[#f0f0f0]">
              <HotLabel text="1 Itens" />
            </button>
            <button role="tab" aria-selected="false" type="button" className="h-full border-b border-black pl-1 pt-px">
              <HotLabel text="2 Seleção" />
            </button>
            <span className="flex-1 self-stretch border-b border-black" />
          </div>
          <DataGrid />
          <Totals />
        </div>
      </main>
      <RemoteTab />
      <QuestionDialog />
    </div>
  );
}
